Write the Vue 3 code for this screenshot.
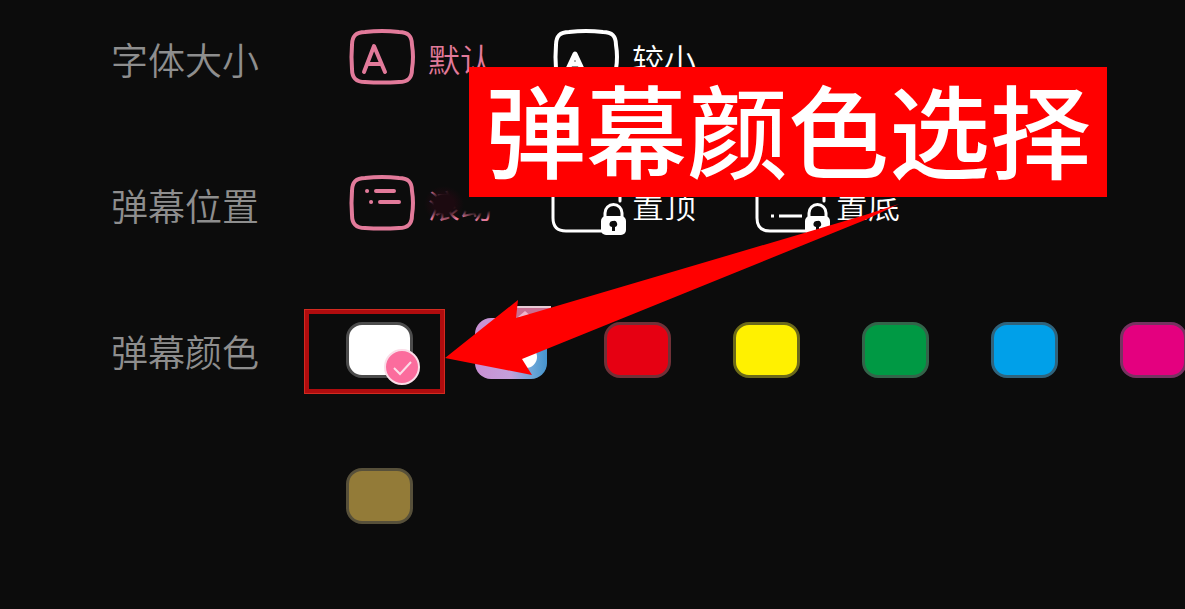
<script setup>
import { ref } from "vue";

const size = ref("default");
const place = ref("scroll");
const color = ref("white");

const sizes = [
    { value: "default", text: "默认" },
    { value: "small", text: "较小" },
];
const places = [
    { value: "scroll", text: "滚动" },
    { value: "top", text: "置顶" },
    { value: "bottom", text: "置底" },
];
const colors = [
    { value: "white", name: "白色" },
    { value: "rainbow", name: "渐变" },
    { value: "red", name: "红色" },
    { value: "yellow", name: "黄色" },
    { value: "green", name: "绿色" },
    { value: "blue", name: "蓝色" },
    { value: "magenta", name: "品红" },
    { value: "gold", name: "金色" },
];
</script>

<template>
    <main class="page">
        <form class="settings">
            <div class="row" role="radiogroup" aria-labelledby="size-title">
                <span id="size-title" class="title">字体大小</span>
                <div class="options">
                    <label v-for="item in sizes" :key="item.value" class="option" :class="{ active: size === item.value }">
                        <input v-model="size" type="radio" name="size" :value="item.value" />
                        <svg class="icon" viewBox="0 1 64 56">
                            <path class="frame" d="M15 3Q32 1 49 3C58 3 62 7 62 16Q64 28 62 40C62 49 58 53 49 53Q32 54 15 53C6 53 2 49 2 40Q1 28 2 16C2 7 6 3 15 3Z" />
                            <path v-if="item.value === 'default'" class="letter" d="M14 43L24 17L35 43M18 35H31" />
                            <path v-else class="letter small" d="M14 40L21 25L28 40M17 35H25" />
                        </svg>
                        <span class="text">{{ item.text }}</span>
                    </label>
                </div>
            </div>

            <div class="row" role="radiogroup" aria-labelledby="place-title">
                <span id="place-title" class="title">弹幕位置</span>
                <div class="options">
                    <label v-for="item in places" :key="item.value" class="option" :class="{ active: place === item.value }">
                        <input v-model="place" type="radio" name="place" :value="item.value" />
                        <svg v-if="item.value === 'scroll'" class="icon" viewBox="0 1 64 56">
                            <path class="frame" d="M15 3Q32 1 49 3C58 3 62 7 62 16Q64 28 62 40C62 49 58 53 49 53Q32 54 15 53C6 53 2 49 2 40Q1 28 2 16C2 7 6 3 15 3Z" />
                            <path class="lines" d="M17 16H17.1M26 16H44M21 27H21.1M30 27H49" />
                        </svg>
                        <svg v-else class="icon" viewBox="0 1 64 56">
                            <path class="frame thin" d="M66 26V14Q66 3 56 3H9Q-1 3 -1 14V43Q-1 56 12 56H50" />
                            <path v-if="item.value === 'top'" class="thin dash" d="M14 15H17M22 15H46" />
                            <path v-else class="thin dash" d="M13 41H16M21 41H44" />
                            <path class="shackle" d="M51 44V38A8 8 0 0 1 68 38V44" />
                            <rect class="lock" x="47" y="41" width="25" height="19" rx="5" />
                            <path class="keyhole" d="M59 46A3 3 0 0 1 61 52V56H58V52A3 3 0 0 1 59 46Z" />
                        </svg>
                        <span class="text">{{ item.text }}</span>
                        <span v-if="item.value === 'scroll'" class="smudge"></span>
                    </label>
                </div>
            </div>

            <div class="row" role="radiogroup" aria-labelledby="color-title">
                <span id="color-title" class="title">弹幕颜色</span>
                <div class="swatches">
                    <label v-for="item in colors" :key="item.value" class="swatch" :class="item.value">
                        <input v-model="color" type="radio" name="color" :value="item.value" :aria-label="item.name" />
                        <svg v-if="item.value === 'rainbow'" class="rainbow-icon" viewBox="0 0 80 76">
                            <defs>
                                <linearGradient id="rainbow" x1="0" y1="0" x2="1" y2="0">
                                    <stop offset="0" stop-color="#c98fd2" />
                                    <stop offset="0.5" stop-color="#c3a0dc" />
                                    <stop offset="0.8" stop-color="#6ba6d8" />
                                    <stop offset="1" stop-color="#4593cc" />
                                </linearGradient>
                            </defs>
                            <rect x="4" y="12" width="72" height="61" rx="16" fill="url(#rainbow)" />
                            <path d="M42 1H80V20H42Z" fill="#c96f92" />
                            <path d="M42 1H80" stroke="#e6ccd6" stroke-width="2" />
                            <path d="M47 11L54 5L61 11Z" fill="#efb4cc" />
                            <circle cx="55" cy="51" r="11" fill="#ffffff" />
                        </svg>
                        <svg v-if="color === item.value" class="check" viewBox="0 0 38 38">
                            <circle cx="19" cy="19" r="17" />
                            <path d="M11 20L17 26L28 14" />
                        </svg>
                    </label>
                </div>
            </div>
        </form>

        <div class="highlight"></div>
        <h1 class="banner">弹幕颜色选择</h1>
        <svg class="arrow" viewBox="0 0 454 176" aria-hidden="true">
            <path d="M0 158L73 100L71 118L420 15L454 4L420 20L77 159L87 175Z" />
        </svg>
    </main>
</template>

<style>
body {
    background: #0c0c0c;
}
</style>

<style scoped>
.page {
    position: relative;
    min-height: 100vh;
    box-sizing: border-box;
    padding: 30px 0 84px 111px;
    overflow: hidden;
    background: #0c0c0c;
    color: #ffffff;
    font-family: "Noto Sans CJK SC", sans-serif;
    font-weight: 350;
}

.settings {
    display: flex;
    flex-direction: column;
    gap: 90px;
}

.row {
    display: flex;
    align-items: flex-start;
    gap: 87px;
}

.title {
    flex: none;
    height: 56px;
    color: #8e8e8e;
    font-size: 37px;
    line-height: 58px;
}

.options {
    display: flex;
    gap: 62px;
    padding-left: 4px;
}

.option {
    position: relative;
    display: flex;
    gap: 14px;
    height: 56px;
    cursor: pointer;
}

.option input,
.swatch input {
    position: absolute;
    inset: 0;
    margin: 0;
    opacity: 0;
}

.icon {
    width: 64px;
    height: 56px;
    overflow: visible;
    fill: none;
    stroke: currentColor;
    stroke-linecap: round;
    stroke-linejoin: round;
}

.frame,
.letter,
.lines {
    stroke-width: 4;
}

.small {
    stroke-width: 5;
}

.thin,
.shackle {
    stroke-width: 3;
}

.dash {
    stroke-linecap: butt;
}

.lock {
    fill: #ffffff;
    stroke: none;
}

.keyhole {
    fill: #0c0c0c;
    stroke: none;
}

.text {
    font-size: 32px;
    line-height: 56px;
}

.active {
    color: #e27a9a;
}

/* worn-out patch over the first position label */
.smudge {
    position: absolute;
    right: -4px;
    top: 6px;
    width: 72px;
    height: 46px;
    background:
        radial-gradient(ellipse 20px 18px at 20px 22px, #1c0a10 50%, transparent),
        radial-gradient(ellipse 38px 30px at 54px 8px, #0c0c0c 75%, transparent);
}

.swatches {
    display: grid;
    grid-template-columns: repeat(7, 67px);
    gap: 90px 62px;
}

.swatch {
    position: relative;
    height: 56px;
    box-sizing: border-box;
    border: 3px solid #4c4c4c;
    border-radius: 16px;
    cursor: pointer;
}

.white {
    background: #ffffff;
}

.red {
    border-color: #703138;
    background: #e60012;
}

.yellow {
    border-color: #6c6a1a;
    background: #fff100;
}

.green {
    border-color: #34644a;
    background: #009944;
}

.blue {
    border-color: #30637c;
    background: #00a0e9;
}

.magenta {
    border-color: #763361;
    background: #e4007f;
}

.gold {
    border-color: #57503a;
    background: #937b38;
}

.rainbow {
    border-color: transparent;
}

.rainbow-icon {
    position: absolute;
    left: -7px;
    top: -19px;
    width: 80px;
    height: 76px;
}

.check {
    position: absolute;
    right: -11px;
    bottom: -11px;
    width: 38px;
    height: 38px;
    fill: #fb6c9d;
    stroke: #fbdde8;
    stroke-width: 2;
}

.check path {
    fill: none;
}

.highlight {
    position: absolute;
    left: 304px;
    top: 309px;
    width: 141px;
    height: 85px;
    box-sizing: border-box;
    border: 5px solid #b00c0e;
    outline: 1px solid #d32a20;
    outline-offset: -1px;
}

.banner {
    position: absolute;
    left: 469px;
    top: 67px;
    margin: 0;
    padding: 0 16px 10px;
    background: #ff0000;
    color: #ffffff;
    font-size: 101px;
    font-weight: 500;
    line-height: 120px;
    white-space: nowrap;
}

.arrow {
    position: absolute;
    left: 445px;
    top: 200px;
    width: 454px;
    height: 176px;
    fill: #ff0000;
}
</style>
